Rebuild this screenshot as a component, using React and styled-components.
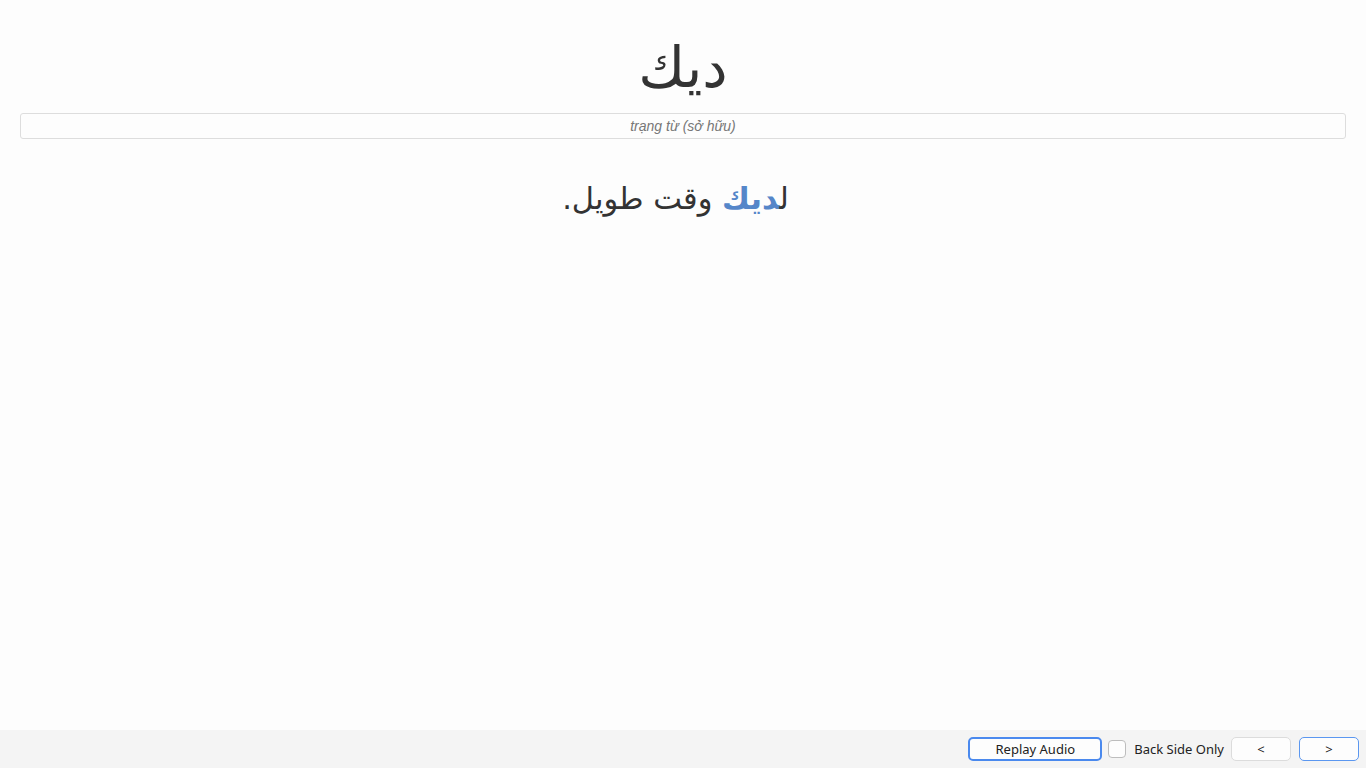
import React, { useState } from 'react';
import styled, { createGlobalStyle } from 'styled-components';

const GlobalStyle = createGlobalStyle`
  html, body {
    margin: 0;
    padding: 0;
    background: #fdfdfd;
  }
  #root {
    height: 100vh;
  }
`;

const Page = styled.div`
  display: flex;
  flex-direction: column;
  height: 100vh;
  font-family: 'DejaVu Sans', sans-serif;
  color: #333;
`;

const Card = styled.main`
  flex: 1;
  display: flex;
  flex-direction: column;
  align-items: stretch;
  padding: 0 20px;
`;

const Word = styled.h1`
  margin: 27px 0 0;
  font-size: 57px;
  font-weight: 400;
  line-height: 81px;
  text-align: center;
  direction: rtl;
`;

const TypeInput = styled.input`
  box-sizing: border-box;
  height: 26px;
  margin-top: 5px;
  border: 1px solid #ddd;
  border-radius: 3px;
  background: #fdfdfd;
  text-align: center;
  font-family: 'Liberation Sans', Arial, sans-serif;
  font-size: 14px;
  font-style: italic;
  outline: none;

  &::placeholder {
    color: #777;
  }
`;

const Sentence = styled.p`
  margin: 36px 0 0;
  padding-right: 15px;
  font-size: 30.5px;
  line-height: 48px;
  text-align: center;
  direction: rtl;
`;

const Highlight = styled.span`
  color: #5586c9;
  font-weight: 700;
`;

const Bar = styled.footer`
  display: flex;
  justify-content: flex-end;
  align-items: center;
  gap: 6px;
  height: 38px;
  padding: 0 7px;
  background: #f4f4f4;
  font-family: 'Noto Sans', 'Open Sans', sans-serif;
  font-size: 13px;
  color: #222;
`;

const Button = styled.button`
  box-sizing: border-box;
  height: 24px;
  width: ${({ $wide }) => ($wide ? '134px' : '60px')};
  margin-left: ${({ $gap }) => $gap || 0}px;
  padding: 0;
  border: ${({ $focused, $active }) =>
    $focused ? '2px solid #4a89ee' : $active ? '1px solid #5b97f0' : '1px solid #dcdcdc'};
  border-radius: 5px;
  background: #fdfdfd;
  font-family: inherit;
  font-size: 13px;
  color: #222;
`;

const CheckLabel = styled.label`
  display: flex;
  align-items: center;
  gap: 8px;
`;

const Box = styled.span`
  box-sizing: border-box;
  width: 18px;
  height: 18px;
  border: 1px solid #bdbdbd;
  border-radius: 4px;
  background: ${({ $checked }) => ($checked ? '#4a89ee' : '#fdfdfd')};
`;

const App = () => {
  const [backOnly, setBackOnly] = useState(false);

  return (
    <>
      <GlobalStyle />
      <Page>
        <Card>
          <Word>ديك</Word>
          <TypeInput placeholder="trạng từ (sở hữu)" />
          <Sentence>
            ل<Highlight>ديك</Highlight> وقت طويل.
          </Sentence>
        </Card>
        <Bar>
          <Button $wide $focused>Replay Audio</Button>
          <CheckLabel onClick={() => setBackOnly(!backOnly)}>
            <Box $checked={backOnly} />
            Back Side Only
          </CheckLabel>
          <Button $gap={1}>&lt;</Button>
          <Button $gap={2} $active>&gt;</Button>
        </Bar>
      </Page>
    </>
  );
};

export default App;
